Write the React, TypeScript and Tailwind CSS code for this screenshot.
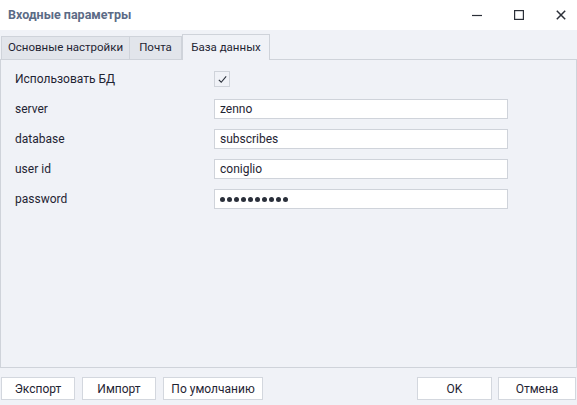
const tabs = [
  { title: 'Основные настройки', w: 'w-[129px]' },
  { title: 'Почта', w: 'w-[52px]' },
  { title: 'База данных', w: 'w-[88px]' },
];

const fields = [
  { label: 'server', value: 'zenno' },
  { label: 'database', value: 'subscribes' },
  { label: 'user id', value: 'coniglio' },
  { label: 'password', value: '', secret: 10 },
];

function DialogButton({ children, className = '' }: { children: React.ReactNode; className?: string }) {
  return (
    <button
      type="button"
      className={`h-[23px] border border-[#d3d7de] bg-white text-[12px] text-[#1f2433] ${className}`}
    >
      {children}
    </button>
  );
}

export default function App() {
  return (
    <div
      className="flex h-[405px] w-[577px] flex-col overflow-hidden bg-[#f0f2f7] text-[12px] text-[#1f2433]"
      style={{ fontFamily: 'Roboto, "Noto Sans", sans-serif' }}
    >
      {/* title bar */}
      <div className="flex h-[30px] shrink-0 items-center bg-white pl-[8px]">
        <span className="text-[12.5px] font-bold text-[#5c6b86]">Входные параметры</span>
        <div className="ml-auto mr-[11px] flex items-center gap-[32px]">
          <svg viewBox="0 0 10 10" className="h-[10px] w-[10px]" fill="none" stroke="#2b2f38" strokeWidth="1.2">
            <path d="M0 5.5 H10" />
          </svg>
          <svg viewBox="0 0 10 10" className="h-[10px] w-[10px]" fill="none" stroke="#2b2f38" strokeWidth="1.2">
            <rect x="0.6" y="0.6" width="8.8" height="8.8" />
          </svg>
          <svg viewBox="0 0 10 10" className="h-[10px] w-[10px]" fill="none" stroke="#2b2f38" strokeWidth="1.5">
            <path d="M0.8 0.8 L9.2 9.2 M9.2 0.8 L0.8 9.2" />
          </svg>
        </div>
      </div>

      {/* tabs */}
      <div className="relative z-10 flex h-[29px] shrink-0 items-end pl-[1px] pt-[4px] text-[11.5px]">
        {tabs.map((t, i) =>
          i === 2 ? (
            <div
              key={t.title}
              className={`-mb-px flex h-[26px] items-center justify-center border border-b-0 border-[#cfd3da] bg-[#f0f2f7] ${t.w}`}
            >
              {t.title}
            </div>
          ) : (
            <div
              key={t.title}
              className={`flex h-[23px] items-center justify-center border border-b-0 border-[#cfd3da] bg-[#e2e5eb] ${
                i > 0 ? 'border-l-0' : ''
              } ${t.w}`}
            >
              {t.title}
            </div>
          ),
        )}
      </div>

      {/* tab panel */}
      <div className="flex h-[309px] shrink-0 flex-col border border-[#cfd3da] pl-[14px] pt-[4px]">
        <div className="flex h-[30px] items-center">
          <span className="w-[199px]">Использовать БД</span>
          <div className="flex h-[16px] w-[16px] items-center justify-center border border-[#cfd3da] bg-[#f0f2f7]">
            <svg viewBox="0 0 12 12" className="h-[11px] w-[11px]" fill="none" stroke="#2a2f3a" strokeWidth="1.2">
              <path d="M2 6.4 L4.6 9 L10 2.6" />
            </svg>
          </div>
        </div>
        {fields.map((f) => (
          <div key={f.label} className="flex h-[30px] items-center">
            <span className="w-[199px]">{f.label}</span>
            <div className="flex h-[20px] w-[294px] items-center gap-[2px] border border-[#cfd3da] bg-white px-[5px]">
              {f.secret
                ? Array.from({ length: f.secret }, (_, k) => (
                    <span key={k} className="h-[5px] w-[5px] rounded-full bg-[#2a2f3a]" />
                  ))
                : f.value}
            </div>
          </div>
        ))}
      </div>

      {/* footer buttons */}
      <div className="flex shrink-0 pl-[1px] pr-[1px] pt-[9px]">
        <DialogButton className="w-[74px]">Экспорт</DialogButton>
        <DialogButton className="ml-[7px] w-[74px]">Импорт</DialogButton>
        <DialogButton className="ml-[7px] w-[100px]">По умолчанию</DialogButton>
        <DialogButton className="ml-auto w-[75px]">OK</DialogButton>
        <DialogButton className="ml-[6px] w-[78px]">Отмена</DialogButton>
      </div>
    </div>
  );
}
